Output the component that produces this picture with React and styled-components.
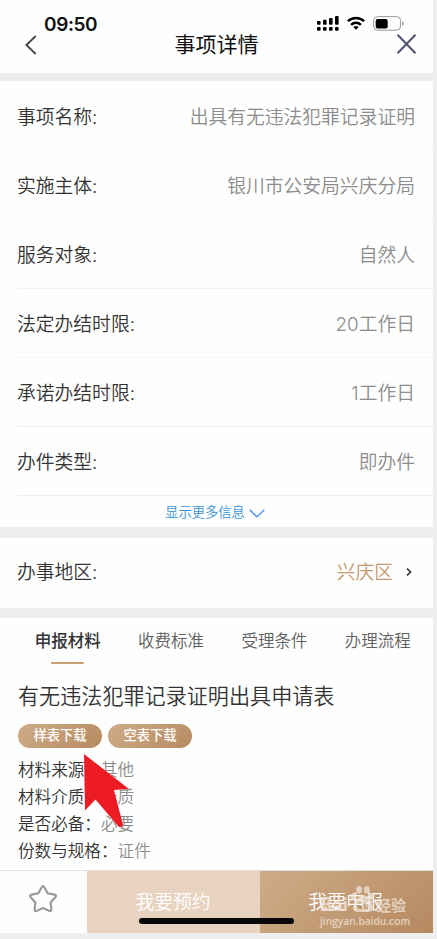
import React from "react";
import styled, { createGlobalStyle, css } from "styled-components";

const Global = createGlobalStyle`
  * { box-sizing: border-box; }
  body {
    margin: 0;
    background: #efefef;
    font-family: Inter, "Noto Sans CJK SC DemiLight", "Noto Sans CJK SC", sans-serif;
    font-weight: 350;
    color: #333;
  }
`;

const Phone = styled.div`
  position: relative;
  width: 433px;
  height: 933px;
  display: flex;
  flex-direction: column;
  background: #ededed;
  overflow: hidden;
  white-space: nowrap;
`;

const Header = styled.header`
  height: 73px;
  flex: none;
  background: #fefefe;
`;

const StatusBar = styled.div`
  height: 32px;
  padding: 15px 29px 0 44px;
  display: flex;
  justify-content: space-between;
  align-items: flex-start;
`;

const Clock = styled.span`
  font: 600 19px/19px Inter, sans-serif;
  letter-spacing: -0.4px;
  color: #111;
`;

const StatusIcons = styled.div`
  display: flex;
  gap: 8px;
  align-items: flex-start;
`;

const NavBar = styled.div`
  height: 26px;
  padding: 0 16px 0 25px;
  display: grid;
  grid-template-columns: 40px 1fr 40px;
  align-items: center;
  svg { display: block; }
  svg:last-child { justify-self: end; margin-bottom: 2px; }
`;

const NavTitle = styled.h1`
  margin: 0 0 3px -9px;
  text-align: center;
  font-family: "Noto Sans CJK SC", sans-serif;
  font-size: 21px;
  line-height: 23px;
  font-weight: 400;
  color: #111;
`;

const Panel = styled.section`
  flex: none;
  height: ${(p) => p.$height}px;
  margin-top: ${(p) => p.$gap}px;
  padding-top: ${(p) => p.$top || 0}px;
  background: #fefefe;
`;

const Row = styled.div`
  height: 69px;
  margin-left: 17px;
  padding: ${(p) => (p.$line ? 4 : 0)}px 18px 0 0;
  display: flex;
  justify-content: space-between;
  align-items: center;
  border-bottom: ${(p) => (p.$line ? `1px solid ${p.$line}` : "none")};
  font-size: 18.8px;
  line-height: 28px;
`;

const Value = styled.span`
  font-weight: 300;
  color: #8c8c8c;
`;

const More = styled.div`
  height: 31px;
  padding-right: 3px;
  display: flex;
  gap: 4px;
  justify-content: center;
  align-items: center;
  font-size: 13.3px;
  color: #3a93d0;
  svg { margin-top: 3px; }
`;

const Region = styled.span`
  display: flex;
  align-items: center;
  gap: 13px;
  color: #c49a70;
  padding-right: 3px;
  svg { margin-bottom: 2px; }
`;

const Tabs = styled.nav`
  display: grid;
  grid-template-columns: repeat(4, 103.4px);
  margin-left: 16px;
  height: 46px;
`;

const Tab = styled.div`
  display: flex;
  flex-direction: column;
  align-items: center;
  padding-top: 11px;
  font-size: 16.5px;
  line-height: 24px;
  color: #606060;
  ${(p) =>
    p.$active &&
    css`
      padding-top: 10px;
      color: #333;
      font-family: "Noto Sans CJK SC", sans-serif;
      font-weight: 500;
      &::after {
        content: "";
        width: 33px;
        height: 2px;
        margin-top: 10px;
        border-radius: 1px;
        background: #c9a072;
      }
    `}
`;

const Material = styled.article`
  padding: 17px 18px 0;
`;

const MaterialTitle = styled.h2`
  margin: 0;
  font-size: 21.1px;
  line-height: 32px;
  font-weight: inherit;
`;

const Downloads = styled.div`
  display: flex;
  gap: 6px;
  margin: 11px 0 8px;
`;

const Download = styled.button`
  width: 84px;
  height: 24px;
  padding: 0 0 2px;
  border: 0;
  border-radius: 12px;
  background: linear-gradient(135deg, #ceac88, #b68a60);
  color: #fff;
  font: 500 13.3px/20px "Noto Sans CJK SC", sans-serif;
`;

const Detail = styled.div`
  height: 27px;
  padding-top: 1px;
  font-size: 16.6px;
  line-height: 27px;
  span { font-weight: 300; color: #8c8c8c; }
`;

const Footer = styled.footer`
  flex: none;
  height: 63px;
  display: grid;
  grid-template-columns: 87px 173px 173px;
  border-top: 1px solid #dfdfdf;
`;

const Favorite = styled.div`
  display: flex;
  align-items: center;
  justify-content: center;
  padding: 0 1px 7px 0;
  background: #fefefe;
`;

const Action = styled.div`
  display: flex;
  align-items: center;
  justify-content: center;
  padding: 0 1px 4px 0;
  font-size: 18.8px;
  color: #fff;
  background: ${(p) => (p.$primary ? "linear-gradient(135deg, #ceac88, #b58960)" : "#e7d3bf")};
`;

const HomeIndicator = styled.div`
  position: absolute;
  left: 139px;
  top: 918px;
  width: 155px;
  height: 6px;
  border-radius: 3px;
  background: #080808;
`;

const Pointer = styled.svg`
  position: absolute;
  left: 83px;
  top: 753px;
`;

const Watermark = styled.div`
  position: absolute;
  left: 320px;
  top: 885px;
  width: 91px;
  height: 43px;
  color: #f0e4d8;
  opacity: 0.76;
  font-family: "Open Sans", sans-serif;
`;

const Brand = styled.div`
  height: 28px;
  display: flex;
  align-items: flex-end;
  font: 800 18.5px/18px Inter, sans-serif;
`;

const BrandLatin = styled.span`
  width: 30px;
  letter-spacing: -0.3px;
`;

const BrandChinese = styled.span`
  margin: 0 0 -1px 1px;
  font: 700 15px/19px "Noto Sans CJK SC", sans-serif;
`;

const Site = styled.div`
  margin-top: 2px;
  font-size: 10.2px;
  line-height: 12px;
  font-weight: 600;
`;

const rows = [
  ["事项名称:", "出具有无违法犯罪记录证明", "#fbfbfb"],
  ["实施主体:", "银川市公安局兴庆分局", "#fafafa"],
  ["服务对象:", "自然人", "#f1f1f1"],
  ["法定办结时限:", "20工作日", "#f6f6f6"],
  ["承诺办结时限:", "1工作日", "#ededed"],
  ["办件类型:", "即办件", "#ededed"],
];

const details = [
  ["材料来源：", "其他"],
  ["材料介质：", "纸质"],
  ["是否必备：", "必要"],
  ["份数与规格：", "证件"],
];

function Signal() {
  return (
    <svg width="22" height="16" viewBox="0 0 22 16">
      {[0, 6, 12, 18].map((x, i) => (
        <g key={x}>
          <rect x={x} y={[6, 4.7, 3, 1][i]} width="3.6" height={[3.8, 5.1, 6.8, 8.8][i]} rx="1" />
          <rect x={x} y="12" width="3.6" height="3.8" rx="1" />
        </g>
      ))}
    </svg>
  );
}

function Wifi() {
  return (
    <svg width="18" height="16" viewBox="0 0 18 16" fill="none" stroke="#000" strokeWidth="2.5">
      <path d="M.9 6.2C5.4 1.9 12.6 1.9 17.1 6.2M4.1 9.8c2.8-2.6 7-2.6 9.8 0" />
      <path d="M9 14.8 6.3 12c1.6-1.3 3.8-1.3 5.4 0Z" fill="#000" stroke="none" />
    </svg>
  );
}

function Battery() {
  return (
    <svg width="31" height="17" viewBox="0 0 31 17">
      <rect x=".6" y="1.6" width="27" height="13.6" rx="4" fill="none" stroke="#999" />
      <rect x="2.7" y="4" width="12" height="9.6" rx="2" />
      <path d="M29.2 6.3c2 .8 2 3.6 0 4.4Z" fill="#999" />
    </svg>
  );
}

export default function App() {
  return (
    <>
      <Global />
      <Phone>
        <Header>
          <StatusBar>
            <Clock>09:50</Clock>
            <StatusIcons>
              <Signal />
              <Wifi />
              <Battery />
            </StatusIcons>
          </StatusBar>
          <NavBar>
            <svg width="12" height="20" viewBox="0 0 12 20" fill="none" stroke="#484848" strokeWidth="1.9">
              <path d="M10.7 1 1.4 10l9.3 9" />
            </svg>
            <NavTitle>事项详情</NavTitle>
            <svg width="21" height="20" viewBox="0 0 21 20" stroke="#51546c" strokeWidth="2">
              <path d="m1.5.8 18 18.4M19.5.8l-18 18.4" />
            </svg>
          </NavBar>
        </Header>

        <Panel $gap={8} $height={446} $top={1}>
          {rows.map(([label, value, line]) => (
            <Row key={label} $line={line}>
              <span>{label}</span>
              <Value>{value}</Value>
            </Row>
          ))}
          <More>
            显示更多信息
            <svg width="16" height="9" viewBox="0 0 16 9" fill="none" stroke="#5695ee" strokeWidth="1.5">
              <path d="m.7.8 7.3 7 7.3-7" />
            </svg>
          </More>
        </Panel>

        <Panel $gap={11} $height={70}>
          <Row>
            <span>办事地区:</span>
            <Region>
              兴庆区
              <svg width="6" height="8" viewBox="0 0 6 8" fill="none" stroke="#333" strokeWidth="1.6">
                <path d="m1 .7 3.6 3.3L1 7.3" />
              </svg>
            </Region>
          </Row>
        </Panel>

        <Panel $gap={10} $height={252}>
          <Tabs>
            <Tab $active>申报材料</Tab>
            <Tab>收费标准</Tab>
            <Tab>受理条件</Tab>
            <Tab>办理流程</Tab>
          </Tabs>
          <Material>
            <MaterialTitle>有无违法犯罪记录证明出具申请表</MaterialTitle>
            <Downloads>
              <Download>样表下载</Download>
              <Download>空表下载</Download>
            </Downloads>
            {details.map(([label, value]) => (
              <Detail key={label}>
                {label}
                <span>{value}</span>
              </Detail>
            ))}
          </Material>
        </Panel>

        <Footer>
          <Favorite>
            <svg width="30" height="30" viewBox="0 0 28 28" fill="none" stroke="#999" strokeWidth="2" strokeLinejoin="round">
              <path d="M12.8 3q1.2-2 2.4 0l3.1 5.6 6.3 1.3q2.5.6.9 2.4l-4.4 4.9.7 6.4q.1 2.3-2 1.5L14 22.4l-5.8 2.7q-2.1.8-2-1.5l.7-6.4-4.4-4.9q-1.6-1.8.9-2.4l6.3-1.3Z" />
            </svg>
          </Favorite>
          <Action>我要预约</Action>
          <Action $primary>我要申报</Action>
        </Footer>

        <Pointer width="48" height="77" viewBox="0 0 48 77">
          <path d="M1 1 46 36 31 37 40 72Q38 76 35 73L12.5 46.5 2 57.5Z" fill="#ed1c24" />
        </Pointer>
        <HomeIndicator />
        <Watermark>
          <Brand>
            <BrandLatin>Bai</BrandLatin>
            <svg width="25" height="28" viewBox="0 0 25 29" fill="currentColor">
              <ellipse cx="9" cy="5" rx="3" ry="4" />
              <ellipse cx="17" cy="5" rx="3" ry="4" />
              <ellipse cx="3" cy="12" rx="2.7" ry="3.6" />
              <ellipse cx="22" cy="12" rx="2.7" ry="3.6" />
              <path fillRule="evenodd" d="M13 10c4 0 5 5 8 8s4 10-3 10H8c-7 0-6-7-3-10s4-8 8-8ZM11 18c-5-1-6 7-1 7h2v-8h-1.5Zm3 1v4q0 2 2 2h3v-6h-1.5v4.5H16V19Z" />
            </svg>
            <BrandChinese>经验</BrandChinese>
          </Brand>
          <Site>jingyan.baidu.com</Site>
        </Watermark>
      </Phone>
    </>
  );
}
